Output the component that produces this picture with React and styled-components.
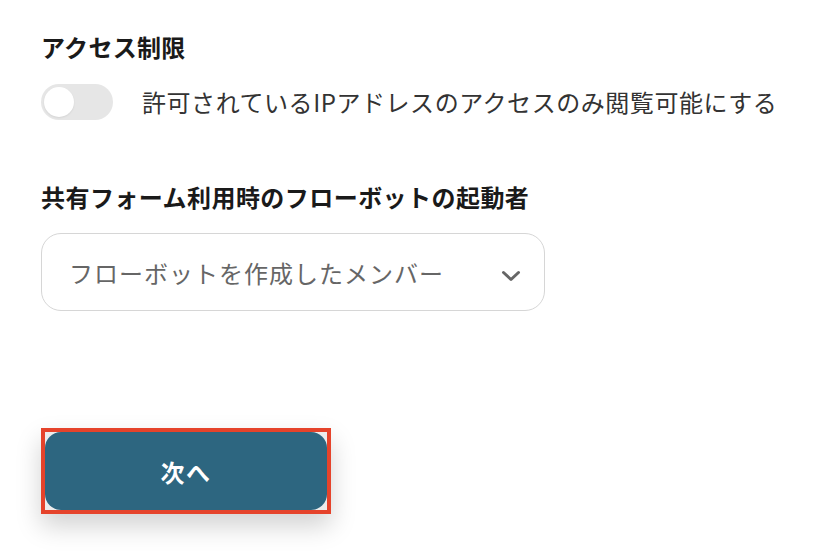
import React, { useState } from 'react'
import styled, { createGlobalStyle } from 'styled-components'

const GlobalStyle = createGlobalStyle`
  body {
    margin: 0;
    background: #ffffff;
    font-family: "Noto Sans CJK JP", "Noto Sans", sans-serif;
  }
`

const Page = styled.div`
  display: flex;
  flex-direction: column;
  align-items: flex-start;
  padding: 29px 0 40px 41px;
`

const Heading = styled.h2`
  margin: 0;
  font-size: 24px;
  line-height: 36px;
  font-weight: 700;
  color: #1a1a1a;
  letter-spacing: ${p => p.$spacing || '0.3px'};
`

const ToggleRow = styled.label`
  display: flex;
  align-items: center;
  gap: 29px;
  margin-top: 19px;
  cursor: pointer;
`

const Track = styled.span`
  position: relative;
  width: 72px;
  height: 36px;
  border-radius: 18px;
  background: ${p => (p.$on ? '#2d6680' : '#e6e6e6')};
  flex-shrink: 0;
`

const Knob = styled.span`
  position: absolute;
  top: 3px;
  left: ${p => (p.$on ? '39px' : '3px')};
  width: 30px;
  height: 30px;
  border-radius: 50%;
  background: #ffffff;
  box-shadow: 0 1px 2px rgba(0, 0, 0, 0.08);
`

const ToggleText = styled.span`
  font-size: 24px;
  line-height: 36px;
  color: #333333;
  letter-spacing: 0.55px;
`

const Section = styled.div`
  display: flex;
  flex-direction: column;
  margin-top: 59px;
`

const Select = styled.div`
  display: flex;
  align-items: center;
  justify-content: space-between;
  box-sizing: border-box;
  width: 504px;
  height: 78px;
  margin-top: 18px;
  padding: 0 23px 0 27px;
  border: 1px solid #d6d6d6;
  border-radius: 20px;
  background: #ffffff;
`

const SelectText = styled.span`
  font-size: 24px;
  color: #666666;
  letter-spacing: 1px;
`

const ChevronIcon = styled.svg`
  margin-top: 7px;
`

const Highlight = styled.div`
  margin-top: 117px;
  border: 4px solid #e5432b;
  background: #ececec;
  box-shadow: 0 12px 24px rgba(0, 0, 0, 0.18);
  display: flex;
`

const NextButton = styled.button`
  width: 282px;
  height: 78px;
  border: none;
  border-radius: 16px;
  background: #2d6680;
  color: #ffffff;
  font-family: "Noto Sans CJK JP", "Noto Sans", sans-serif;
  font-size: 24px;
  font-weight: 700;
  letter-spacing: 1.5px;
  cursor: pointer;
`

function Chevron() {
  return (
    <ChevronIcon width="20" height="12" viewBox="0 0 20 12" fill="none">
      <path d="M2.5 2.5l7.5 7 7.5-7" stroke="#666" strokeWidth="3" strokeLinecap="round" strokeLinejoin="round" />
    </ChevronIcon>
  )
}

export default function App() {
  const [on, setOn] = useState(false)
  return (
    <Page>
      <GlobalStyle />
      <Heading>アクセス制限</Heading>
      <ToggleRow onClick={() => setOn(!on)}>
        <Track $on={on}>
          <Knob $on={on} />
        </Track>
        <ToggleText>許可されているIPアドレスのアクセスのみ閲覧可能にする</ToggleText>
      </ToggleRow>
      <Section>
        <Heading $spacing="0.45px">共有フォーム利用時のフローボットの起動者</Heading>
        <Select>
          <SelectText>フローボットを作成したメンバー</SelectText>
          <Chevron />
        </Select>
      </Section>
      <Highlight>
        <NextButton>次へ</NextButton>
      </Highlight>
    </Page>
  )
}
